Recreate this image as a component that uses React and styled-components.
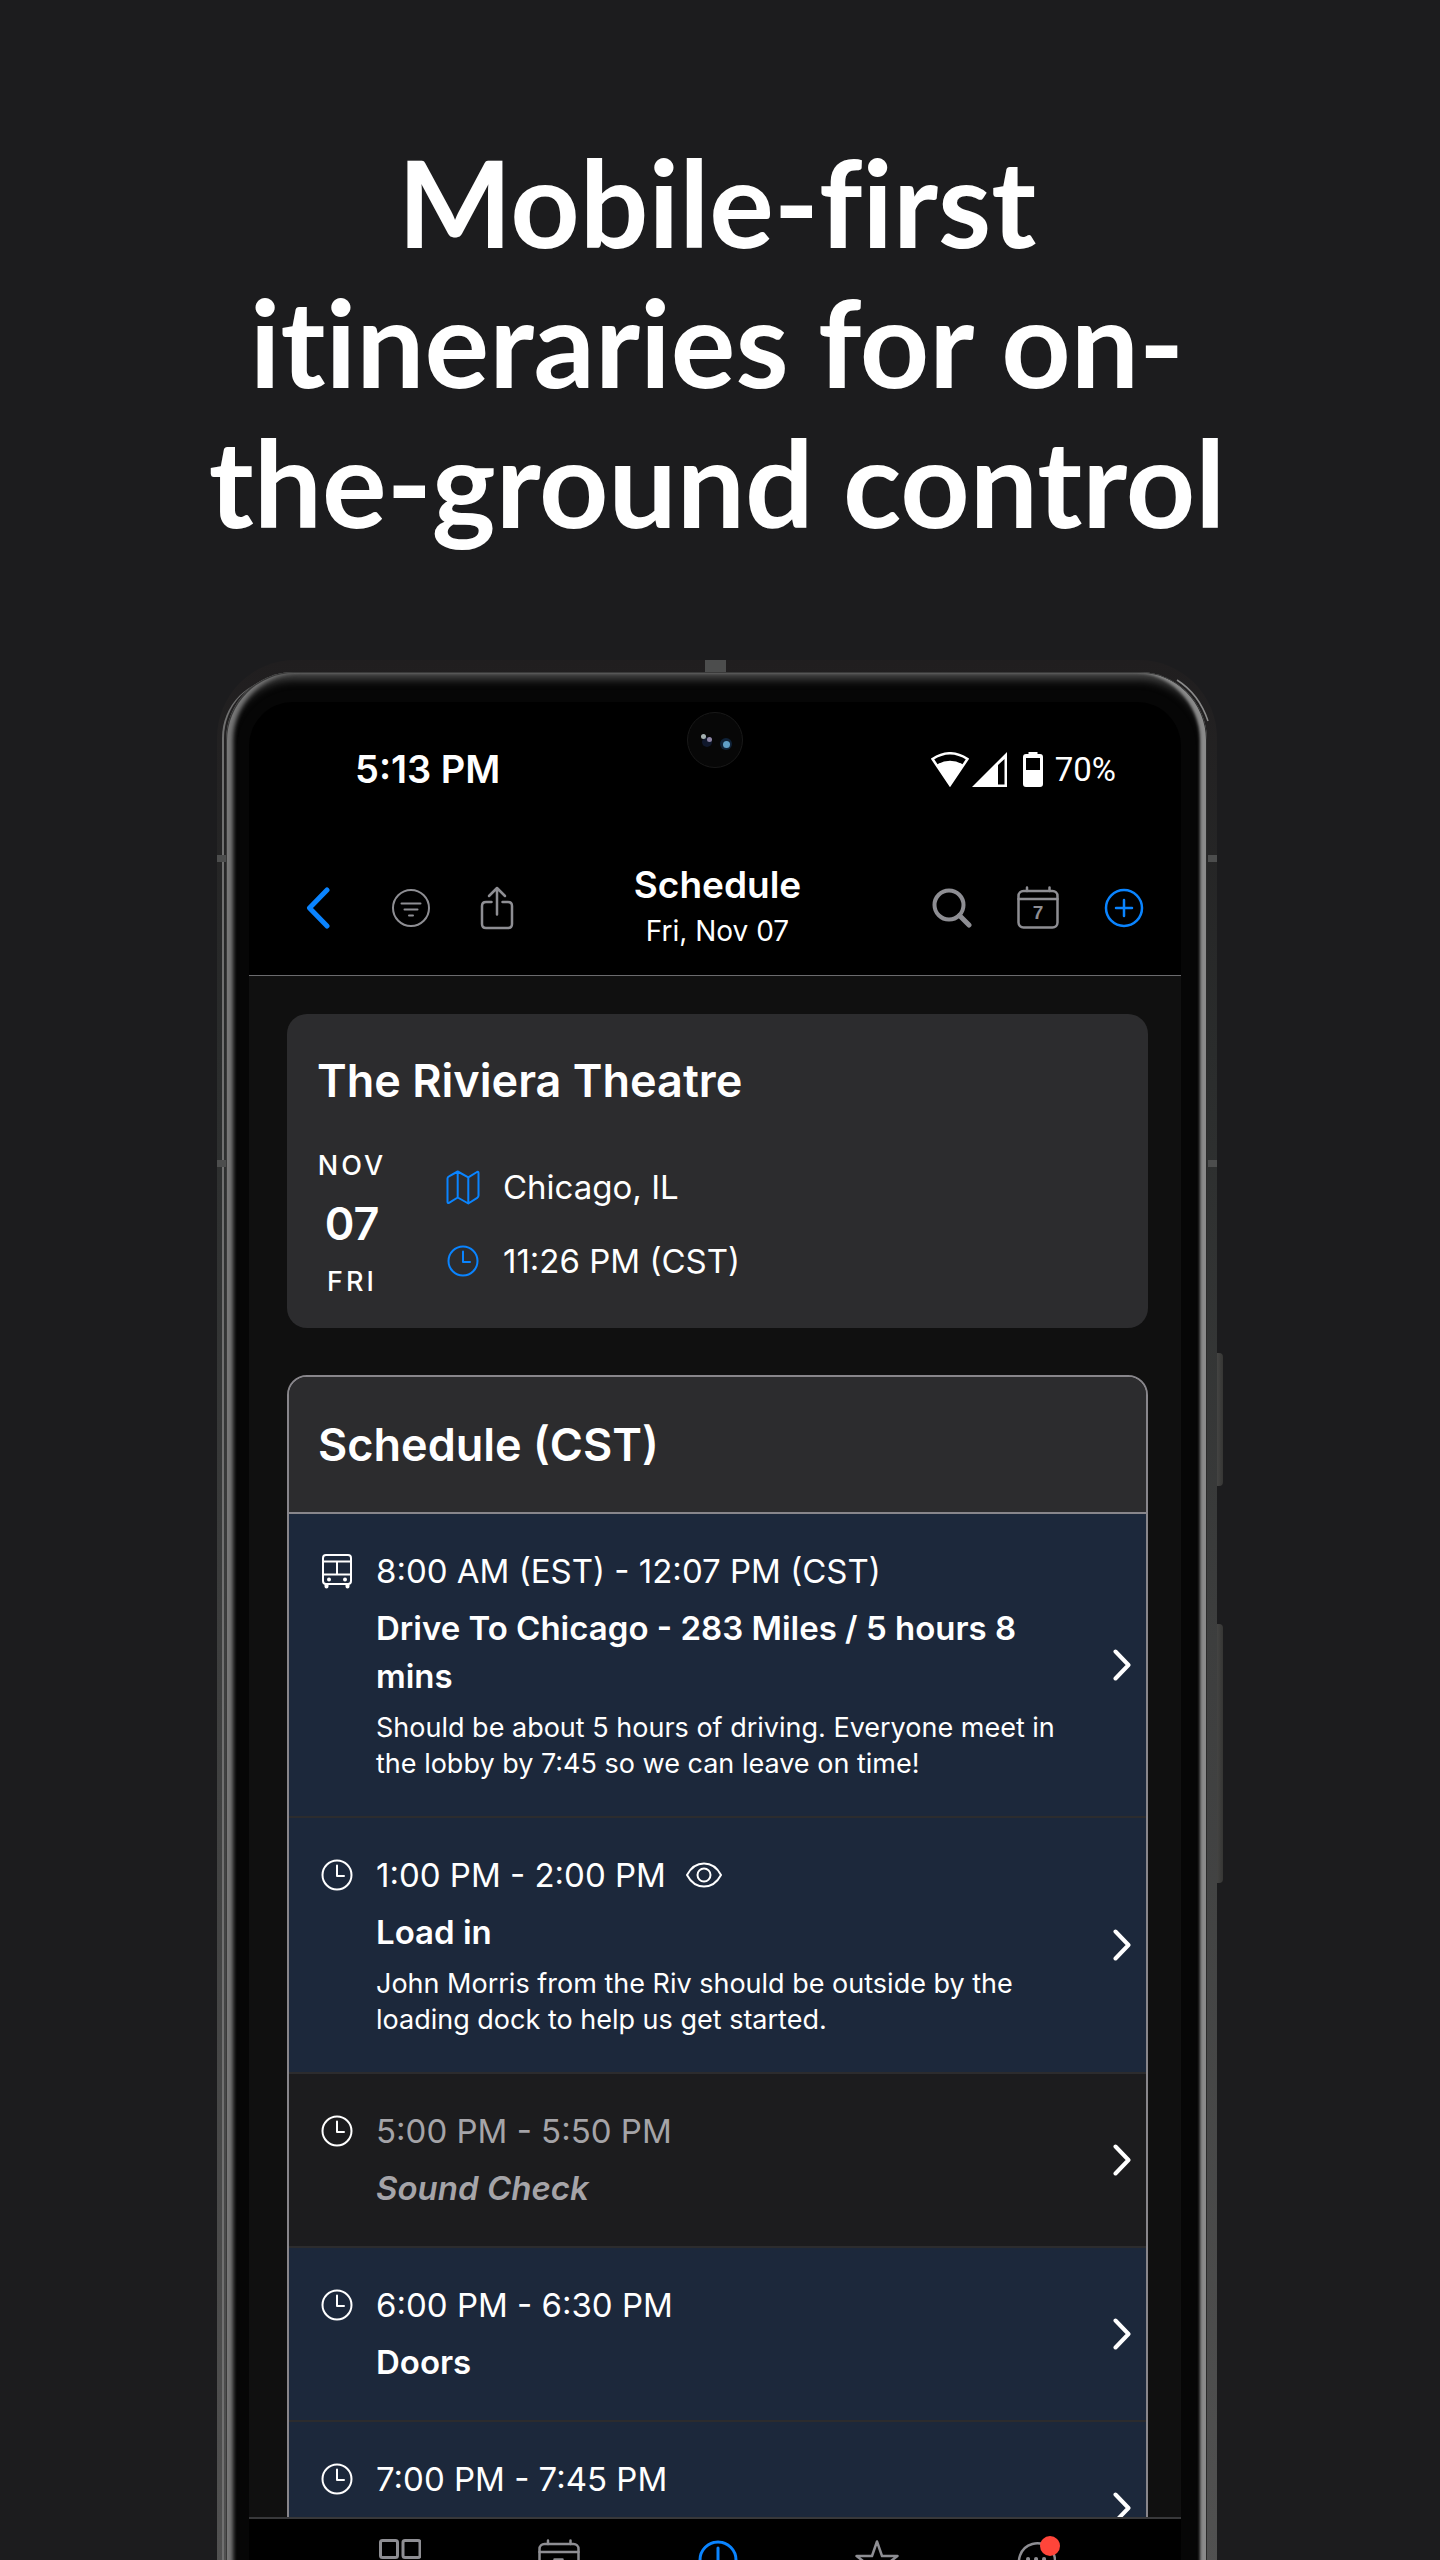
import styled, { createGlobalStyle, css } from "styled-components";

const GlobalStyle = createGlobalStyle`
  *, *::before, *::after {
    box-sizing: border-box;
  }

  body {
    margin: 0;
    background-color: #1c1c1e;
    color: #fff;
    font-family: Inter, "Liberation Sans", sans-serif;
  }

  h1, h2, h3, p {
    margin: 0;
  }
`;

const Page = styled.main`
  display: flex;
  flex-direction: column;
  height: 100vh;
  padding: 132px 223px 0 217px;
  overflow: hidden;
`;

const Headline = styled.h1`
  flex: none;
  align-self: center;
  max-width: 1080px;
  margin: 0 -40px 108px;
  font-family: Lato, "Open Sans", sans-serif;
  font-size: 121px;
  font-weight: 700;
  font-variant-ligatures: none;
  line-height: 140px;
  text-align: center;
`;

/* Phone */
const Phone = styled.div`
  position: relative;
  display: flex;
  flex: 1;
  min-height: 0;
  margin-bottom: -60px;
  padding: 12px 10px 0 9px;
  border-radius: 78px 78px 0 0;
  background: linear-gradient(#201e1f, #2a2c2c 20%, #3d3e3e 50%, #525252);

  &::before {
    content: "";
    position: absolute;
    top: 18px;
    bottom: 0;
    left: 5px;
    width: 60px;
    border-left: 2px solid #707070;
    border-top-left-radius: 60px;
  }
`;

const PhoneBody = styled.div`
  position: relative;
  display: flex;
  flex: 1;
  min-width: 0;
  padding: 30px 26px 0 23px;
  border-radius: 68px 68px 0 0;
  background-color: #060606;
  box-shadow: inset 1px 1px 0 #3a3a3a, inset -1px 0 0 #2a2a2a,
    inset 7px 0 4px #777, inset -7px 0 3px #8a8a8a, inset 0 7px 10px #4a4a4a;
`;

const Antenna = styled.span`
  position: absolute;
  background-color: #4c4d4d;

  ${({ $side, $y }) =>
    $side === "top"
      ? css`
          top: 0;
          left: calc(50% - 12px);
          width: 21px;
          height: 12px;
        `
      : css`
          top: ${$y}px;
          ${$side}: 0;
          width: 9px;
          height: 7px;
        `}
`;

const SideKey = styled.span`
  position: absolute;
  top: ${({ $y }) => $y}px;
  right: -6px;
  width: 6px;
  height: ${({ $length }) => $length}px;
  border-radius: 0 4px 4px 0;
  background: linear-gradient(to right, #444443, #363634);
`;

const EdgeGlint = styled.svg`
  position: absolute;
  top: 18px;
  right: 6px;
`;

const Camera = styled.svg`
  position: absolute;
  top: 10px;
  left: calc(50% - 28px);
`;

const Screen = styled.div`
  position: relative;
  display: flex;
  flex: 1;
  flex-direction: column;
  min-width: 0;
  overflow: hidden;
  border-radius: 44px 44px 0 0;
  background-color: #000;
`;

/* Bars */
const StatusBar = styled.div`
  display: flex;
  flex: none;
  align-items: center;
  justify-content: space-between;
  height: 139px;
  padding: 0 65px 5px 106px;
`;

const Clock = styled.span`
  font-size: 38px;
  font-weight: 600;
`;

const StatusIcons = styled.div`
  display: flex;
  align-items: center;
  font-family: Roboto, sans-serif;
  font-size: 33px;

  svg + svg {
    margin-left: 3px;
  }

  svg:last-of-type {
    margin: 0 12px 0 16px;
  }
`;

const AppHeader = styled.header`
  display: grid;
  grid-template-columns: 1fr auto 1fr;
  flex: none;
  align-items: center;
  height: 135px;
  padding: 0 14px 0 19px;
  border-bottom: 1px solid #6b6b6e;
`;

const Actions = styled.div`
  display: flex;
  justify-content: ${({ $end }) => ($end ? "flex-end" : "flex-start")};
`;

const IconButton = styled.button`
  display: grid;
  place-items: center;
  width: ${({ $wide }) => ($wide ? 100 : 86)}px;
  height: 86px;
  padding: 0;
  border: 0;
  background: none;
  color: ${({ $active }) => ($active ? "#0a84ff" : "#8e8e93")};
  cursor: pointer;
`;

const HeaderTitle = styled.div`
  text-align: center;

  h2 {
    font-size: 37px;
    font-weight: 600;
    line-height: 46px;
  }

  p {
    font-size: 28px;
    line-height: 46px;
  }
`;

const TabBar = styled.nav`
  display: flex;
  flex: none;
  align-items: flex-start;
  height: 103px;
  padding: 20px 66px 0 71px;
  border-top: 2px solid #38383a;
`;

const Tab = styled.a`
  position: relative;
  display: flex;
  flex: 1;
  justify-content: center;
  color: ${({ $active }) => ($active ? "#0a84ff" : "#8e8e93")};
`;

const Badge = styled.span`
  position: absolute;
  top: -3px;
  left: calc(50% + 4px);
  width: 20px;
  height: 20px;
  border-radius: 50%;
  background-color: #ff453a;
`;

/* Content */
const Content = styled.div`
  display: flex;
  flex: 1;
  flex-direction: column;
  gap: 47px;
  min-height: 0;
  padding: 38px 33px 0 38px;
  overflow: hidden;
  background-color: #101010;
`;

const VenueCard = styled.section`
  flex: none;
  padding: 39px 30px 17px;
  border-radius: 20px;
  background-color: #2c2c2e;
`;

const CardTitle = styled.h2`
  font-size: 45px;
  font-weight: 600;
  line-height: 56px;
`;

const VenueBody = styled.div`
  display: flex;
  gap: 58px;
  margin-top: 28px;
`;

const DateBlock = styled.div`
  display: flex;
  flex-direction: column;
  align-items: center;
  width: 70px;
  font-size: 27px;
  font-weight: 500;
  letter-spacing: 3px;
  line-height: 58px;

  strong {
    font-size: 45px;
    font-weight: 600;
    letter-spacing: 0;
  }
`;

const Facts = styled.div`
  display: flex;
  flex-direction: column;
  justify-content: center;
`;

const Fact = styled.p`
  display: grid;
  grid-template-columns: 36px auto;
  align-items: center;
  column-gap: 22px;
  font-size: 33px;
  line-height: 74px;

  svg {
    justify-self: center;
    color: #0a84ff;
  }
`;

const ScheduleCard = styled.section`
  flex: none;
  overflow: hidden;
  border: 2px solid #88868b;
  border-radius: 20px;
  background-color: #1c1c1e;
`;

const ScheduleHead = styled.div`
  padding: 40px 29px 39px;
  border-bottom: 2px solid #88868b;
  background-color: #2c2c2e;
`;

const Event = styled.a`
  display: flex;
  align-items: center;
  min-height: 174px;
  padding: 33px 15px 34px 32px;
  background-color: ${({ $muted }) => ($muted ? "#1c1c1e" : "#1c283b")};
  color: #fff;
  text-decoration: none;

  & + & {
    border-top: 2px solid #2c2c2e;
  }
`;

const EventIcon = styled.span`
  display: flex;
  align-items: center;
  align-self: flex-start;
  width: 55px;
  height: 48px;
`;

const EventText = styled.div`
  flex: 1;
  align-self: flex-start;
  padding-right: 22px;
  color: ${({ $muted }) => ($muted ? "#a5a4a8" : "#fff")};
`;

const EventTime = styled.div`
  display: flex;
  align-items: center;
  gap: 19px;
  font-size: 33px;
  line-height: 48px;
`;

const EventTitle = styled.h3`
  margin-top: 9px;
  font-size: 33px;
  font-style: ${({ $muted }) => ($muted ? "italic" : "normal")};
  font-weight: 600;
  line-height: 48px;
`;

const EventNote = styled.p`
  margin-top: 10px;
  font-size: 27px;
  line-height: 36px;
`;

/* Icons */
const Icon = ({ w, h = w, stroke = 2, children }) => (
  <svg
    width={w}
    height={h}
    viewBox={`0 0 ${w} ${h}`}
    fill="none"
    stroke="currentColor"
    strokeWidth={stroke}
    strokeLinecap="round"
    strokeLinejoin="round"
    aria-hidden="true"
  >
    {children}
  </svg>
);

const ClockIcon = () => (
  <Icon w={32}>
    <circle cx="16" cy="16" r="14.5" />
    <path d="M16 6.5V17h7" />
  </Icon>
);

const BusIcon = () => (
  <Icon w={32} h={36}>
    <rect x="2" y="2" width="28" height="29" rx="3" />
    <path d="M3 8.5h26M3 21.5h26M16 8.5v13" />
    <circle cx="8" cy="26.5" r="2" fill="currentColor" stroke="none" />
    <circle cx="24" cy="26.5" r="2" fill="currentColor" stroke="none" />
    <path d="M5.5 32v1.5M26.5 32v1.5" strokeWidth="4" />
  </Icon>
);

const MapIcon = () => (
  <Icon w={36}>
    <path d="M2.5 9.5Q2.5 8 4 7.3L12.7 2.5 23.3 8.3 32 3q1.5-.7 1.5 1v22.5q0 1.5-1.3 2.3L23.3 34.5 12.7 28.5 4 33.8q-1.5.7-1.5-1ZM12.7 2.5v26M23.3 8.3v26" />
  </Icon>
);

const EyeIcon = () => (
  <Icon w={38} h={28}>
    <path d="M2 14C6 6.500 12 2.5 19 2.5S32 6.500 36 14C32 21.5 26 25.5 19 25.5S6 21.5 2 14Z" />
    <circle cx="19" cy="14" r="6.5" />
  </Icon>
);

const ChevronIcon = () => (
  <Icon w={18} h={32} stroke={4}>
    <path d="M2.5 2.5 15.5 16 2.5 29.5" />
  </Icon>
);

const CalendarIcon = ({ children }) => (
  <Icon w={42} h={44} stroke={2.5}>
    <rect x="1.5" y="5" width="39" height="36.5" rx="5" />
    <path d="M1.5 13h39M10 1.5V5M32.5 1.5V5" />
    {children}
  </Icon>
);

const events = [
  {
    icon: <BusIcon />,
    time: "8:00 AM (EST) - 12:07 PM (CST)",
    title: "Drive To Chicago - 283 Miles / 5 hours 8 mins",
    note: "Should be about 5 hours of driving. Everyone meet in the lobby by 7:45 so we can leave on time!",
  },
  {
    time: "1:00 PM - 2:00 PM",
    title: "Load in",
    note: "John Morris from the Riv should be outside by the loading dock to help us get started.",
    watched: true,
  },
  { time: "5:00 PM - 5:50 PM", title: "Sound Check", muted: true },
  { time: "6:00 PM - 6:30 PM", title: "Doors" },
  { time: "7:00 PM - 7:45 PM" },
];

const EventRow = ({ icon, time, title, note, watched, muted }) => (
  <Event href="#event" $muted={muted}>
    <EventIcon>{icon || <ClockIcon />}</EventIcon>
    <EventText $muted={muted}>
      <EventTime>
        {time}
        {watched && <EyeIcon />}
      </EventTime>
      {title && <EventTitle $muted={muted}>{title}</EventTitle>}
      {note && <EventNote>{note}</EventNote>}
    </EventText>
    <ChevronIcon />
  </Event>
);

const Status = () => (
  <StatusBar>
    <Clock>5:13 PM</Clock>
    <StatusIcons>
      <svg width="38" height="35" viewBox="0 0 38 35" fill="#fff">
        <path
          d="M1.5 7Q19-4.5 36.5 7L19 33Z"
          fill="none"
          stroke="#fff"
          strokeWidth="2.5"
        />
        <path d="M6 12.5Q19 5 32 12.5L19 34Z" />
      </svg>
      <svg width="35" height="35" viewBox="0 0 35 35" fill="#fff">
        <path d="M35 0V35H0ZM32.5 7L26 13V32.5H32.5Z" fillRule="evenodd" />
      </svg>
      <svg width="20" height="35" viewBox="0 0 20 35" fill="#fff">
        <path
          d="M5.5 0H14.5V2H17Q20 2 20 5V32Q20 35 17 35H3Q0 35 0 32V5Q0 2 3 2H5.5ZM3 6V18H17V6Z"
          fillRule="evenodd"
        />
      </svg>
      70%
    </StatusIcons>
  </StatusBar>
);

const App = () => {
  return (
    <>
      <GlobalStyle />
      <Page>
        <Headline>Mobile-first itineraries for on-the-ground control</Headline>

        <Phone>
          <Antenna $side="top" />
          <Antenna $side="left" $y={195} />
          <Antenna $side="right" $y={195} />
          <Antenna $side="left" $y={500} />
          <Antenna $side="right" $y={500} />
          <SideKey $y={693} $length={133} />
          <SideKey $y={964} $length={259} />
          <EdgeGlint width="36" height="46" viewBox="0 0 36 46" fill="none">
            <path d="M2 2Q24 16 33 43" stroke="#8a8a8a" strokeWidth="1.5" />
          </EdgeGlint>

          <PhoneBody>
            <Screen>
              <Camera width="56" height="56" viewBox="0 0 56 56">
                <circle cx="28" cy="28" r="27.5" fill="#070707" stroke="#191919" />
                <circle cx="20" cy="30" r="5" fill="#10182c" />
                <circle cx="16.5" cy="24.5" r="2.5" fill="#a4b0b0" />
                <circle cx="22.5" cy="27.5" r="2.5" fill="#8c84a4" />
                <circle cx="39" cy="32" r="6" fill="#0f2238" />
                <circle cx="39.5" cy="32.5" r="3.5" fill="#5f9fc8" />
              </Camera>

              <Status />

              <AppHeader>
                <Actions>
                  <IconButton $active $wide aria-label="Back">
                    <Icon w={24} h={42} stroke={5}>
                      <path d="M21 3 3.5 21 21 39" />
                    </Icon>
                  </IconButton>
                  <IconButton aria-label="Filter">
                    <Icon w={40}>
                      <circle cx="20" cy="20" r="18" />
                      <path d="M10.5 15.5h19M13.5 21.5h13M18 27.5h4" />
                    </Icon>
                  </IconButton>
                  <IconButton aria-label="Share">
                    <Icon w={34} h={44} stroke={2.5}>
                      <path d="M11.5 16H6q-4 0-4 4v18q0 4 4 4h22q4 0 4-4V20q0-4-4-4h-5.5" />
                      <path d="M17 28.5V2M9 10l8-8 8 8" />
                    </Icon>
                  </IconButton>
                </Actions>
                <HeaderTitle>
                  <h2>Schedule</h2>
                  <p>Fri, Nov 07</p>
                </HeaderTitle>
                <Actions $end>
                  <IconButton aria-label="Search">
                    <Icon w={40} stroke={4}>
                      <circle cx="17" cy="17" r="14.5" />
                      <path d="M27.5 27.5 37 37" strokeWidth="5" />
                    </Icon>
                  </IconButton>
                  <IconButton aria-label="Pick a date">
                    <CalendarIcon>
                      <text
                        x="21"
                        y="33"
                        fill="currentColor"
                        stroke="none"
                        fontSize="19"
                        fontWeight="600"
                        textAnchor="middle"
                      >
                        7
                      </text>
                    </CalendarIcon>
                  </IconButton>
                  <IconButton $active aria-label="Add event">
                    <Icon w={40} stroke={2.5}>
                      <circle cx="20" cy="20" r="18" />
                      <path d="M20 12v16M12 20h16" />
                    </Icon>
                  </IconButton>
                </Actions>
              </AppHeader>

              <Content>
                <VenueCard>
                  <CardTitle>The Riviera Theatre</CardTitle>
                  <VenueBody>
                    <DateBlock>
                      <span>NOV</span>
                      <strong>07</strong>
                      <span>FRI</span>
                    </DateBlock>
                    <Facts>
                      <Fact>
                        <MapIcon />
                        Chicago, IL
                      </Fact>
                      <Fact>
                        <ClockIcon />
                        11:26 PM (CST)
                      </Fact>
                    </Facts>
                  </VenueBody>
                </VenueCard>

                <ScheduleCard>
                  <ScheduleHead>
                    <CardTitle>Schedule (CST)</CardTitle>
                  </ScheduleHead>
                  {events.map((event) => (
                    <EventRow key={event.time} {...event} />
                  ))}
                </ScheduleCard>
              </Content>

              <TabBar>
                <Tab href="#home" aria-label="Dashboard">
                  <Icon w={42} h={44} stroke={3}>
                    <rect x="1.5" y="1.5" width="17" height="17" rx="2" />
                    <rect x="24" y="1.5" width="17" height="17" rx="2" />
                    <rect x="1.5" y="24" width="17" height="17" rx="2" />
                    <rect x="24" y="24" width="17" height="17" rx="2" />
                  </Icon>
                </Tab>
                <Tab href="#calendar" aria-label="Calendar">
                  <CalendarIcon>
                    <path d="M16.5 20.5h8l-5 12" />
                  </CalendarIcon>
                </Tab>
                <Tab href="#schedule" aria-label="Schedule" $active>
                  <Icon w={42} h={44} stroke={3}>
                    <circle cx="21" cy="21" r="18" />
                    <path d="M21 9V23h9" />
                  </Icon>
                </Tab>
                <Tab href="#starred" aria-label="Starred">
                  <Icon w={44} stroke={2.5}>
                    <path d="M22 2.5 27 17H42.5L30 26.5 34.5 41.5 22 32.5 9.5 41.5 14 26.5 1.5 17H17Z" />
                  </Icon>
                </Tab>
                <Tab href="#chat" aria-label="Messages">
                  <Icon w={40} h={44} stroke={2.5}>
                    <path d="M4 40l2.5-7A18 18 0 1 1 13 38.5Z" />
                    <path d="M12 20h.1M20 20h.1M28 20h.1" strokeWidth="4" />
                  </Icon>
                  <Badge />
                </Tab>
              </TabBar>
            </Screen>
          </PhoneBody>
        </Phone>
      </Page>
    </>
  );
};

export default App;
